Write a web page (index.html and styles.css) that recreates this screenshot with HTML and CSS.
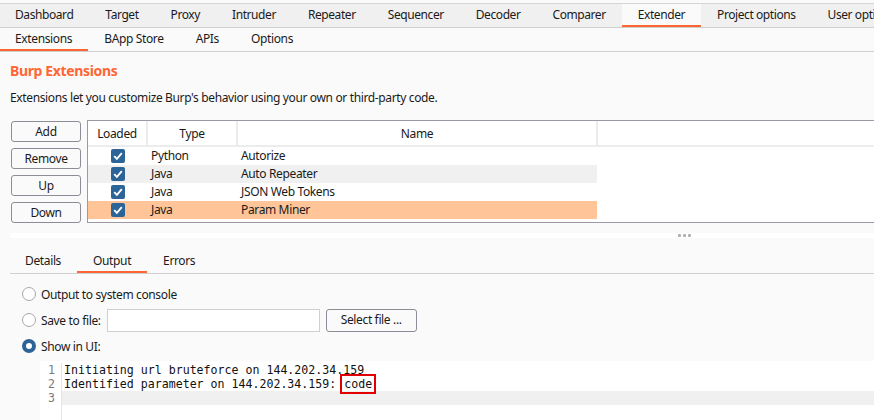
FILE: index.html
```html
<!DOCTYPE html>
<html>
<head>
<meta charset="utf-8">
<link rel="stylesheet" href="styles.css">
</head>
<body>
<div class="app">
  <nav class="tabs main-tabs">
    <span class="tab">Dashboard</span>
    <span class="tab">Target</span>
    <span class="tab">Proxy</span>
    <span class="tab">Intruder</span>
    <span class="tab">Repeater</span>
    <span class="tab">Sequencer</span>
    <span class="tab">Decoder</span>
    <span class="tab">Comparer</span>
    <span class="tab active">Extender</span>
    <span class="tab">Project options</span>
    <span class="tab">User options</span>
  </nav>
  <nav class="tabs sub-tabs">
    <span class="tab active">Extensions</span>
    <span class="tab">BApp Store</span>
    <span class="tab">APIs</span>
    <span class="tab">Options</span>
  </nav>

  <section class="content">
    <h2 class="heading">Burp Extensions</h2>
    <p class="desc">Extensions let you customize Burp's behavior using your own or third-party code.</p>

    <div class="ext-row">
      <div class="btn-col">
        <button class="btn">Add</button>
        <button class="btn">Remove</button>
        <button class="btn">Up</button>
        <button class="btn">Down</button>
      </div>
      <div class="table-box">
        <table class="ext-table">
          <colgroup><col class="c-loaded"><col class="c-type"><col class="c-name"><col></colgroup>
          <thead>
            <tr><th>Loaded</th><th>Type</th><th>Name</th><th class="blank"></th></tr>
          </thead>
          <tbody>
            <tr><td class="chk"><span class="checkbox"><svg viewBox="0 0 14 14" width="14" height="14"><path d="M3.2 7.2 L5.9 9.9 L10.8 4.2" fill="none" stroke="#fff" stroke-width="1.9"/></svg></span></td><td>Python</td><td>Autorize</td><td class="blank"></td></tr>
            <tr class="alt"><td class="chk"><span class="checkbox"><svg viewBox="0 0 14 14" width="14" height="14"><path d="M3.2 7.2 L5.9 9.9 L10.8 4.2" fill="none" stroke="#fff" stroke-width="1.9"/></svg></span></td><td>Java</td><td>Auto Repeater</td><td class="blank"></td></tr>
            <tr><td class="chk"><span class="checkbox"><svg viewBox="0 0 14 14" width="14" height="14"><path d="M3.2 7.2 L5.9 9.9 L10.8 4.2" fill="none" stroke="#fff" stroke-width="1.9"/></svg></span></td><td>Java</td><td>JSON Web Tokens</td><td class="blank"></td></tr>
            <tr class="sel"><td class="chk"><span class="checkbox"><svg viewBox="0 0 14 14" width="14" height="14"><path d="M3.2 7.2 L5.9 9.9 L10.8 4.2" fill="none" stroke="#fff" stroke-width="1.9"/></svg></span></td><td>Java</td><td>Param Miner</td><td class="blank"></td></tr>
          </tbody>
        </table>
      </div>
    </div>

    <div class="splitter"><span class="dot"></span><span class="dot"></span><span class="dot"></span></div>

    <nav class="tabs bottom-tabs">
      <span class="tab">Details</span>
      <span class="tab active">Output</span>
      <span class="tab">Errors</span>
    </nav>

    <div class="options">
      <label class="radio-row"><span class="radio"></span>Output to system console</label>
      <div class="radio-row">
        <span class="radio"></span><span class="lbl">Save to file:</span>
        <span class="field"></span>
        <button class="btn btn-file">Select file ...</button>
      </div>
      <label class="radio-row"><span class="radio on"></span>Show in UI:</label>
    </div>

    <div class="editor">
      <div class="gutter"><div>1</div><div>2</div><div>3</div></div>
      <div class="lines">
        <div class="line">Initiating url bruteforce on 144.202.34.159</div>
        <div class="line">Identified parameter on 144.202.34.159: <span class="mark">code</span></div>
        <div class="line current"></div>
      </div>
    </div>
  </section>
</div>
</body>
</html>
```
FILE: styles.css
```css
* { box-sizing: border-box; }
html, body { margin: 0; padding: 0; }
body {
  background: #fafafa;
  font-family: "Noto Sans", "Open Sans", sans-serif;
  font-size: 12px;
  letter-spacing: -0.36px;
  color: #1a1a1a;
  width: 874px;
  height: 420px;
  overflow: hidden;
}
.app { padding-top: 3px; }

.tabs { display: flex; white-space: nowrap; overflow: hidden; }
.tab { display: block; padding: 0 16px; line-height: 22px; flex: none; }
.main-tabs {
  background: #f0f0f0;
  border-top: 1px solid #d6d6d6;
  border-bottom: 1px solid #cfcfcf;
  height: 25px;
  letter-spacing: -0.42px;
}
.main-tabs .tab { padding: 0 16px; line-height: 22px; height: 23px; }
.main-tabs .tab:first-child { padding-left: 15px; }
.main-tabs .tab.active { background: #fafafa; border-bottom: 2px solid #ff6633; }

.sub-tabs {
  background: #fafafa;
  border-bottom: 1px solid #cfcfcf;
  height: 24px;
}
.sub-tabs .tab { line-height: 22px; height: 23px; }
.sub-tabs .tab:first-child { padding-left: 15px; }
.sub-tabs .tab.active { border-bottom: 2px solid #ff6633; }

.content { padding: 0 0 0 10px; }
.heading {
  margin: 9px 0 0;
  font-size: 14px;
  font-weight: bold;
  color: #ff6633;
  line-height: 20px;
}
.desc { margin: 8px 0 0; line-height: 18px; }

.ext-row { display: flex; gap: 6px; margin-top: 13px; }
.btn-col { display: flex; flex-direction: column; gap: 6px; width: 71px; padding-left: 1px; padding-top: 1px; }
.btn {
  font: inherit;
  letter-spacing: inherit;
  color: #1a1a1a;
  background: #fafafa;
  border: 1px solid #8d8d95;
  border-radius: 3px;
  height: 21px;
  padding: 0;
  line-height: 18px;
}
.table-box {
  flex: 1;
  background: #fff;
  border: 1px solid #9a9aa6;
  border-right: none;
  height: 103px;
}
.ext-table { border-collapse: collapse; width: 100%; table-layout: fixed; }
.c-loaded { width: 59px; }
.c-type { width: 90px; }
.c-name { width: 360px; }
.ext-table th {
  font-weight: normal;
  height: 25px;
  border-right: 2px solid #ececec;
  border-bottom: 2px solid #ececec;
  text-align: center;
  padding: 0;
}
.ext-table th.blank { border-right: none; }
.ext-table td { height: 18px; padding: 0 0 0 4px; line-height: 18px; }
.ext-table td.chk { text-align: center; padding: 0 0 0 1px; }
.ext-table td.blank { background: #fff; }
.ext-table tr.alt td { background: #f0f0f0; }
.ext-table tr.alt td.blank { background: #fff; }
.ext-table tr.sel td { background: #ffc599; }
.ext-table tr.sel td.blank { background: #fff; }
.checkbox {
  display: inline-block;
  width: 14px; height: 14px;
  background: #2d6498;
  border-radius: 2px;
  vertical-align: middle;
  margin-top: -2px;
}
.checkbox svg { display: block; }

.splitter {
  margin-top: 10px;
  height: 5px;
  background: #fff;
  display: flex;
  align-items: center;
  gap: 2px;
  padding-left: 668px;
}
.dot { width: 3px; height: 3px; background: #b0b0b0; border-radius: 1px; flex: none; }

.bottom-tabs {
  margin-top: 12px;
  border-bottom: 1px solid #d0d0d0;
  height: 24px;
}
.bottom-tabs .tab { line-height: 22px; height: 23px; }
.bottom-tabs .tab:first-child { padding-left: 15px; }
.bottom-tabs .tab.active { border-bottom: 2px solid #ff6633; }

.options { padding: 7px 0 0 12px; display: flex; flex-direction: column; }
.radio-row { display: flex; align-items: center; height: 26px; }
.radio {
  width: 14px; height: 14px;
  border-radius: 50%;
  border: 1px solid #a8a8a8;
  background: #fff;
  margin-right: 5px;
  flex: none;
}
.radio.on { border: 4px solid #2d6498; }
.lbl { margin-right: 6px; }
.field {
  width: 213px; height: 23px;
  border: 1px solid #cfcfcf;
  background: #fff;
  margin-right: 6px;
}
.btn-file { width: 91px; height: 23px; }

.editor {
  margin: 2px 0 0 30px;
  background: #fff;
  height: 62px;
  display: flex;
  font-family: "DejaVu Sans Mono", monospace;
  font-size: 11.6px;
  letter-spacing: 0;
  line-height: 14px;
  padding-top: 2px;
}
.gutter {
  width: 22px;
  text-align: right;
  padding-right: 6px;
  color: #7a7a7a;
  border-right: 1px solid #e6e6e6;
  height: 60px;
}
.lines { flex: 1; }
.line { padding-left: 2px; height: 14px; color: #111; white-space: pre; }
.line.current { background: #f0f0f0; }
.mark { outline: 2px solid #e00000; outline-offset: 1px; padding: 0 1px; }
```
